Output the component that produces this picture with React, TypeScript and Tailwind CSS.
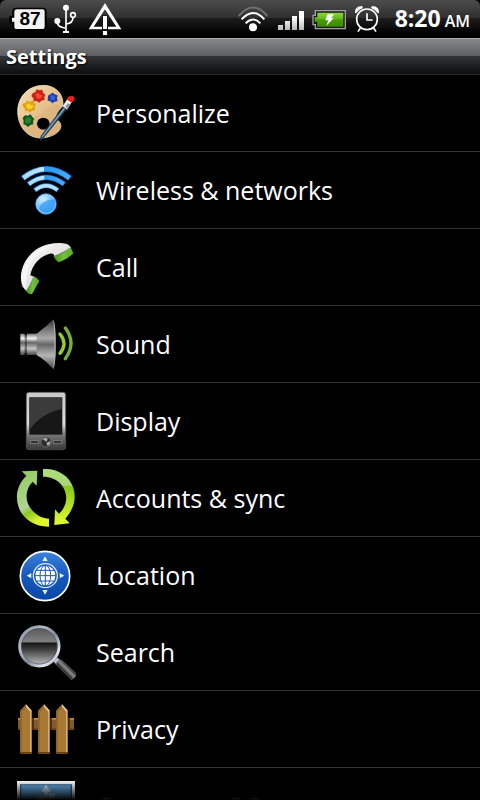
import type { ReactNode } from "react";

function Icon({ children }: { children: ReactNode }) {
  return (
    <svg viewBox="48 21 180 180" className="size-15 shrink-0" aria-hidden="true">
      {children}
    </svg>
  );
}

function PaletteIcon() {
  return (
    <Icon>
      <defs>
        <linearGradient id="wood" x1="0" y1="0" x2="1" y2="1">
          <stop offset="0" stopColor="#f6dfb8" />
          <stop offset="0.5" stopColor="#e6c08c" />
          <stop offset="1" stopColor="#dcb27a" />
        </linearGradient>
      </defs>
      <path
        d="M130 28C86 28 53 62 53 106c0 44 28 80 68 80 24 0 46-9 57-23 6-8 6-16 2-23-9-8-14-17-10-28 6-11 17-16 19-28 1-32-25-56-59-56z"
        fill="url(#wood)"
        stroke="#f9ead0"
        strokeWidth="2"
      />
      <path d="M56 125q45 10 80-22t44-8q-6 20-12 35 20 8 12 30-20 24-58 24-48-2-66-59z" fill="#d9ac72" opacity=".4" />
      <ellipse cx="130" cy="143" rx="19" ry="18" fill="#000" />
      <path d="M98 52l8-4 4-8 9 3 8-2 2 9 7 6-3 8 1 8-10 2-6 6-8-5-9 1-1-9-6-7z" fill="#cf2018" />
      <path d="M106 55l8-5 6 7 8 0-4 8-8 4-7-5z" fill="#ee4a38" />
      <path d="M144 59l8-5 6-4 6 5 9 3-2 9 2 8-9 2-7 5-6-6-8-2z" fill="#1c3fae" />
      <path d="M151 60l8-3 7 6-3 8-9 1z" fill="#3763d6" />
      <path d="M68 83l9-2 3-8 8 4 12-3 3 8 5 5-5 7 2 9-9 1-6 6-7-6-8 1-1-8-6-7z" fill="#e0a30c" />
      <path d="M77 87l9-6 6 6 9 1-5 9-10 3-6-5z" fill="#ffd02c" />
      <path d="M68 125l7-7 9 1 8-4 5 8 6 6-4 7 1 9-9 2-7 6-7-6-7-3 1-8z" fill="#0d5a22" />
      <path d="M76 128l10-5 9 6-4 11-9 3-7-6z" fill="#2a7d34" />
      <path d="M189 93l12 7-70 86-11 9 2-15z" fill="#1f3c55" />
      <path d="M191 96l4 3-66 84-4 3 1-6z" fill="#7aa3ba" />
      <path d="M187 91l15-21 15 5-15 26z" fill="#dfe4ea" />
      <path d="M197 91l15-18 5 2-15 25z" fill="#8a8f99" />
      <path d="M201 72q-2-13 18-12 9 7 3 14l-9 6z" fill="#e2231a" />
      <path d="M202 72l12 8-5 4-11-7z" fill="#fff" />
    </Icon>
  );
}

function WirelessIcon() {
  return (
    <Icon>
      <defs>
        <radialGradient id="ball" cx=".35" cy=".25" r=".9">
          <stop offset="0" stopColor="#d4efff" />
          <stop offset="0.5" stopColor="#6fc0fb" />
          <stop offset="1" stopColor="#2590f0" />
        </radialGradient>
        <linearGradient id="wave" x1="0" x2="1" y1="0" y2="0">
          <stop offset="0" stopColor="#a9dcff" />
          <stop offset="0.44" stopColor="#bfe6ff" />
          <stop offset="0.45" stopColor="#2b96f2" />
          <stop offset="1" stopColor="#49abf8" />
        </linearGradient>
      </defs>
      <g fill="none" strokeLinecap="butt">
        <path d="M68 76q71-56 142 0" stroke="#1878dd" strokeWidth="17" />
        <path d="M70 75q69-54 138 0" stroke="url(#wave)" strokeWidth="13" />
        <path d="M85 94q54-42 108 0" stroke="#1878dd" strokeWidth="15" />
        <path d="M87 93q52-40 104 0" stroke="url(#wave)" strokeWidth="11" />
        <path d="M104 112q35-28 70 0" stroke="#2388e8" strokeWidth="14" />
        <path d="M106 111q33-26 66 0" stroke="#b5e1ff" strokeWidth="10" />
      </g>
      <circle cx="138" cy="153" r="31" fill="url(#ball)" stroke="#3c9cf0" strokeWidth="2" />
      <circle cx="138" cy="153" r="28" fill="none" stroke="#aadcff" strokeWidth="2" />
      <path d="M118 168q3-26 48-30 4 28-18 40-18 5-30-10z" fill="#3198f3" opacity=".7" />
    </Icon>
  );
}

function CallIcon() {
  return (
    <Icon>
      <defs>
        <linearGradient id="handset" x1="0" y1="0" x2="1" y2="1">
          <stop offset="0" stopColor="#ffffff" />
          <stop offset="0.6" stopColor="#dedede" />
          <stop offset="1" stopColor="#b5b5b5" />
        </linearGradient>
        <linearGradient id="cap" x1="0" y1="0" x2="1" y2="0">
          <stop offset="0" stopColor="#3f8f17" />
          <stop offset="0.5" stopColor="#72c03c" />
          <stop offset="1" stopColor="#58ab28" />
        </linearGradient>
      </defs>
      <path
        d="M80 184C58 165 57 129 76 94c20-35 58-57 105-55 19 1 26 5 33 15l-51 25c-1-9-7-10-14-8-31 9-52 33-58 65l11 4z"
        fill="url(#handset)"
      />
      <path d="M66 170q-8-44 18-77 32-44 82-48-72 18-84 78-4 30-3 56z" fill="#fff" opacity=".5" />
      <path d="M161 79q29-8 51-27l8 18q-20 19-44 27-11-7-15-18z" fill="url(#cap)" />
      <path d="M101 139q10 3 17 14l-22 40q-11 0-18-10 15-18 23-44z" fill="url(#cap)" />
      <path d="M161 79q29-8 51-27M101 139q-8 26-23 44" stroke="#8a9a82" strokeWidth="2" fill="none" />
    </Icon>
  );
}

function SoundIcon() {
  return (
    <Icon>
      <defs>
        <linearGradient id="tube" x1="0" y1="0" x2="0" y2="1">
          <stop offset="0" stopColor="#777" />
          <stop offset="0.22" stopColor="#f2f2f2" />
          <stop offset="0.42" stopColor="#666" />
          <stop offset="0.7" stopColor="#c4c4c4" />
          <stop offset="1" stopColor="#444" />
        </linearGradient>
        <linearGradient id="cone" x1="0" y1="0" x2="0" y2="1">
          <stop offset="0" stopColor="#333" />
          <stop offset="0.2" stopColor="#777" />
          <stop offset="0.38" stopColor="#ababab" />
          <stop offset="0.5" stopColor="#666" />
          <stop offset="0.72" stopColor="#b5b5b5" />
          <stop offset="1" stopColor="#444" />
        </linearGradient>
      </defs>
      <rect x="61" y="80" width="13" height="64" rx="2" fill="url(#tube)" />
      <rect x="72" y="84" width="12" height="56" fill="url(#tube)" opacity=".6" />
      <rect x="81" y="80" width="30" height="64" fill="url(#tube)" />
      <path d="M110 80q30-21 50-43 7 15 7 75t-7 75q-20-25-50-43z" fill="url(#cone)" />
      <path d="M160 37q7 15 7 75t-7 75q3-35 3-75t-3-75z" fill="#aaa" />
      <g fill="none" strokeLinecap="round" strokeWidth="10">
        <path d="M180 81q24 29 0 58" stroke="#8fce2d" />
        <path d="M196 63q34 46 0 92" stroke="#76b03a" />
      </g>
    </Icon>
  );
}

function DisplayIcon() {
  return (
    <Icon>
      <defs>
        <linearGradient id="shell" x1="0" y1="0" x2="0" y2="1">
          <stop offset="0" stopColor="#c9c9c9" />
          <stop offset="0.55" stopColor="#dadada" />
          <stop offset="0.74" stopColor="#777" />
          <stop offset="1" stopColor="#383838" />
        </linearGradient>
      </defs>
      <rect x="79" y="25" width="118" height="172" rx="8" fill="url(#shell)" stroke="#555" strokeWidth="2" />
      <rect x="89" y="41" width="97" height="110" fill="#3b3b3b" stroke="#222" strokeWidth="2" />
      <path d="M90 135q36-48 96-60v75H90z" fill="#171717" />
      <rect x="91" y="170" width="25" height="8" fill="#333" stroke="#888" strokeWidth="2" />
      <rect x="160" y="170" width="25" height="8" fill="#333" stroke="#888" strokeWidth="2" />
      <circle cx="138" cy="174" r="15" fill="#2c2c2c" stroke="#777" strokeWidth="2" />
      <path d="M127 166q10-8 16-2l-3 9zM139 177l12-6q1 12-8 15z" fill="#aaa" />
    </Icon>
  );
}

function SyncIcon() {
  return (
    <Icon>
      <defs>
        <linearGradient id="syncLeft" x1="0" y1="0" x2=".4" y2="1">
          <stop offset="0" stopColor="#8ccb55" />
          <stop offset="0.65" stopColor="#b1d596" />
          <stop offset="0.78" stopColor="#8dc91c" />
          <stop offset="1" stopColor="#dff52c" />
        </linearGradient>
        <linearGradient id="syncRight" x1="0" y1="0" x2="0" y2="1">
          <stop offset="0" stopColor="#aee07a" />
          <stop offset="0.28" stopColor="#a9d579" />
          <stop offset="0.32" stopColor="#86c818" />
          <stop offset="1" stopColor="#e3fb30" />
        </linearGradient>
      </defs>
      <path
        d="M65 31l47-2-2 45-12-12c-26 26-24 66 3 90 12 12 28 20 46 21v24c-41 1-80-22-92-61-10-33-3-65 24-92z"
        fill="url(#syncLeft)"
      />
      <path
        d="M129 24c43-3 79 20 91 56 10 33 1 64-24 93l13 14-46 5 2-47 12 13c27-24 29-62 5-89-14-15-32-22-53-22z"
        fill="url(#syncRight)"
      />
    </Icon>
  );
}

function LocationIcon() {
  return (
    <Icon>
      <defs>
        <linearGradient id="disc" x1="0" y1="0" x2="0" y2="1">
          <stop offset="0" stopColor="#3c82dc" />
          <stop offset="0.5" stopColor="#1759bb" />
          <stop offset="1" stopColor="#0747a5" />
        </linearGradient>
      </defs>
      <circle cx="135" cy="114" r="74" fill="url(#disc)" stroke="#fff" strokeWidth="5" />
      <path d="M135 55l8 14h-16zM135 170l8-14h-16zM80 113l14-8v16zM193 113l-14-8v16z" fill="#e8f0fb" />
      <circle cx="136" cy="113" r="36" fill="none" stroke="#dbe8fa" strokeWidth="4" />
      <circle cx="136" cy="113" r="30" fill="#fff" />
      <g fill="none" stroke="#1759bb" strokeWidth="3">
        <path d="M136 82v62M104 113h64M110 97h52M110 129h52" />
        <ellipse cx="136" cy="113" rx="16" ry="31" />
      </g>
    </Icon>
  );
}

function SearchIcon() {
  return (
    <Icon>
      <defs>
        <linearGradient id="rim" x1="0" y1="0" x2="1" y2="1">
          <stop offset="0" stopColor="#7e8894" />
          <stop offset="0.3" stopColor="#b5bcc8" />
          <stop offset="0.55" stopColor="#7d8695" />
          <stop offset="0.8" stopColor="#e2e7ef" />
          <stop offset="1" stopColor="#7a8395" />
        </linearGradient>
        <linearGradient id="lens" x1="0" y1="0" x2="0" y2="1">
          <stop offset="0" stopColor="#555" />
          <stop offset="0.38" stopColor="#808080" />
          <stop offset="0.42" stopColor="#161616" />
          <stop offset="0.6" stopColor="#444" />
          <stop offset="1" stopColor="#c4c4c4" />
        </linearGradient>
        <linearGradient id="grip" gradientUnits="userSpaceOnUse" x1="190" y1="168" x2="206" y2="152">
          <stop offset="0" stopColor="#222" />
          <stop offset="0.5" stopColor="#8d8d8d" />
          <stop offset="1" stopColor="#1c1c1c" />
        </linearGradient>
      </defs>
      <path d="M160 139l12-11 12 10-13 13z" fill="#b9c2d2" />
      <path d="M168 148q3-13 16-13l46 42q-5 13-16 17z" fill="url(#grip)" stroke="#777" strokeWidth="2" />
      <circle cx="118" cy="94" r="59" fill="url(#lens)" stroke="url(#rim)" strokeWidth="9" />
      <circle cx="118" cy="94" r="53" fill="none" stroke="#4b5260" strokeWidth="2" />
    </Icon>
  );
}

function Picket({ x }: { x: number }) {
  return (
    <g transform={`translate(${x} 0)`}>
      <path d="M0 57l18-20 18 20v129H0z" fill="#a87933" />
      <path d="M0 57l18-20v8L5 60v121H0z" fill="#8f6327" />
      <path d="M18 37l18 20v123h-5V59L18 44z" fill="#e3c7a0" />
      <path d="M34 56h2v130h-2z" fill="#86591d" />
      <path d="M0 180h36v6H0z" fill="#6b4310" />
    </g>
  );
}

function PrivacyIcon() {
  return (
    <Icon>
      <path d="M54 78h168v36H54z" fill="#835a2e" />
      <path d="M54 78h168v5H54z" fill="#c48a3b" />
      <path d="M54 108h168v6H54z" fill="#6e461d" />
      <path d="M96 78h6v36h-6zM150 78h6v36h-6zM204 78h6v36h-6z" fill="#4f3014" />
      <Picket x={60} />
      <Picket x={114} />
      <Picket x={168} />
    </Icon>
  );
}

function ConnectIcon() {
  return (
    <Icon>
      <path d="M51 36h174v140H51z" fill="#ffffff" />
      <path d="M60 46h156v120H60z" fill="#2c5f8c" />
      <path d="M64 49h148v114H64z" fill="#6bb1ea" />
      <path d="M138 47l15 21h-10v80h-10V68h-10z" fill="#d3e9fa" />
      <path d="M145 73h20v18h-20z" fill="#d3e9fa" />
      <circle cx="121" cy="91" r="11" fill="#d3e9fa" />
    </Icon>
  );
}

const settings = [
  { label: "Personalize", icon: <PaletteIcon /> },
  { label: "Wireless & networks", icon: <WirelessIcon /> },
  { label: "Call", icon: <CallIcon /> },
  { label: "Sound", icon: <SoundIcon /> },
  { label: "Display", icon: <DisplayIcon /> },
  { label: "Accounts & sync", icon: <SyncIcon /> },
  { label: "Location", icon: <LocationIcon /> },
  { label: "Search", icon: <SearchIcon /> },
  { label: "Privacy", icon: <PrivacyIcon /> },
  { label: "Connect to PC", icon: <ConnectIcon /> },
];

function StatusBar() {
  return (
    <div className="flex h-[38px] shrink-0 items-center justify-between rounded-t-md bg-[linear-gradient(to_bottom,#4c4c4c_0%,#303030_46%,#1e1e1e_47%,#000000_90%)] pr-[10px] pl-[9px] text-white">
      <div className="flex items-center">
        <div className="relative mr-[7px] flex h-6 w-[38px] items-center justify-center">
          <svg viewBox="27 19 114 72" className="absolute inset-0 size-full" aria-hidden="true">
            <path d="M48 21h82q10 0 10 10v48q0 11-10 11H48q-11 0-11-11V69H28V46h9V31q0-10 11-10z" fill="#000" />
            <path d="M51 26h77q6 0 6 6v46q0 7-6 7H51q-8 0-8-7V63h-7V51h7V32q0-6 8-6z" fill="#f2f2f2" />
          </svg>
          <span className="relative pl-1 font-['Liberation_Sans',sans-serif] text-[19px] leading-6 font-bold text-black">87</span>
        </div>
        <svg viewBox="162 9 69 90" className="mr-[10px] h-[30px] w-[23px]" aria-label="USB connected">
          <g fill="none" stroke="#fff" strokeWidth="5">
            <path d="M198 20v74M171 62q2 17 24 19M219 49q0 18-20 20" />
            <circle cx="219" cy="42" r="7" />
          </g>
          <circle cx="198" cy="20" r="9" fill="#fff" />
          <circle cx="172" cy="60" r="9" fill="#fff" />
          <path d="M189 90h18v6h-18z" fill="#fff" />
        </svg>
        <svg viewBox="261 6 108 102" className="h-[34px] w-9" aria-label="Debugging warning">
          <path d="M315 9l49 79h-98zM315 28l-34 52h68z" fill="#fff" fillRule="evenodd" />
          <path d="M306 46h18v62h-18z" fill="#161616" />
          <path d="M309 48h12v39h-12zM309 93h12v12h-12z" fill="#fff" />
        </svg>
      </div>
      <div className="flex items-center">
        <svg viewBox="21 17 96 81" className="mr-[9px] h-[27px] w-8" aria-label="Wi-Fi">
          <g fill="none" stroke="#fff" strokeWidth="6">
            <path d="M26 47q43-51 86 0" stroke="#6f6f6f" />
            <path d="M35 57q34-38 68 0" />
            <path d="M47 69q22-23 44 0" />
          </g>
          <circle cx="69" cy="81" r="12" fill="#fff" />
        </svg>
        <svg viewBox="144 33 78 63" className="mr-2 h-[21px] w-[26px]" aria-label="Signal strength">
          <defs>
            <linearGradient id="bars" gradientUnits="userSpaceOnUse" x1="0" y1="36" x2="0" y2="93">
              <stop offset="0.4" stopColor="#fff" />
              <stop offset="1" stopColor="#bbb" />
            </linearGradient>
          </defs>
          <path d="M144 81h15v15h-15zM165 69h15v27h-15zM186 54h15v42h-15zM207 39h15v57h-15z" fill="url(#bars)" />
        </svg>
        <svg viewBox="246 27 102 63" className="mr-2 h-[21px] w-[34px]" aria-label="Battery charging">
          <defs>
            <linearGradient id="charge" x1="0" y1="0" x2="0" y2="1">
              <stop offset="0" stopColor="#8ad63d" />
              <stop offset="0.45" stopColor="#65b51d" />
              <stop offset="0.5" stopColor="#479e05" />
              <stop offset="1" stopColor="#3d8a03" />
            </linearGradient>
          </defs>
          <path d="M256 32h90v54h-90V74h-7V46h7z" fill="#1a1a1a" stroke="#a0a0a0" strokeWidth="4" />
          <path d="M262 38h78v42h-78V66h-8V52h8z" fill="url(#charge)" />
          <path d="M293 43h19l-9 12h8l-22 22 6-16h-9z" fill="#fff" />
        </svg>
        <svg viewBox="372 15 78 84" className="mr-[15px] h-7 w-[26px]" aria-label="Alarm set">
          <g fill="none" stroke="#fff" strokeWidth="5">
            <circle cx="411" cy="58" r="31" />
            <path d="M411 40v20h17M391 84l-7 11M431 84l7 11" />
          </g>
          <path d="M375 39q-2-20 21-21l3 6q-14 5-21 16zM447 39q2-20-21-21l-3 6q14 5 21 16z" fill="#fff" />
        </svg>
        <time className="flex items-baseline gap-1 leading-8 font-bold">
          <span className="text-[23px]">8:20</span>
          <span className="text-[16px] font-semibold">AM</span>
        </time>
      </div>
    </div>
  );
}

export default function App() {
  return (
    <div className="flex h-screen flex-col overflow-hidden bg-black font-['Open_Sans','Noto_Sans',sans-serif] text-white">
      <StatusBar />
      <header className="flex h-[37px] shrink-0 items-center border-t border-b border-t-[#aaaaaa] border-b-[#27292b] bg-[linear-gradient(to_bottom,#85878a_0%,#5c5e60_49%,#323436_50%,#0c0d0e_100%)] px-[6px]">
        <h1 className="text-[20px] leading-7 font-bold text-shadow-[1px_1px_2px_#000]">Settings</h1>
      </header>
      <main className="relative min-h-0 flex-1 overflow-hidden">
        <ul>
          {settings.map((item) => (
            <li key={item.label} className="border-b border-[#333333]">
              <button type="button" className="flex h-[76px] w-full items-center gap-5 px-4 text-left">
                {item.icon}
                <span className="text-[25px] leading-8">{item.label}</span>
              </button>
            </li>
          ))}
        </ul>
        <div className="pointer-events-none absolute inset-x-0 bottom-0 h-5 bg-linear-to-b from-transparent to-black" />
      </main>
    </div>
  );
}
